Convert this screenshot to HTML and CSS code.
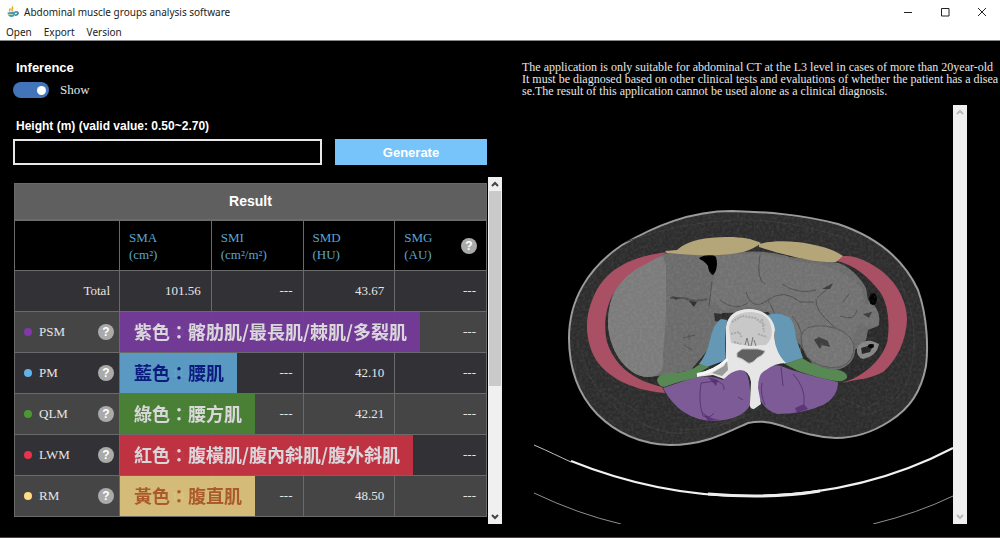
FILE: index.html
```html
<!DOCTYPE html>
<html lang="en">
<head>
<meta charset="utf-8">
<meta name="viewport" content="width=device-width, initial-scale=1">
<title>Abdominal muscle groups analysis software</title>
<link rel="stylesheet" href="styles.css">
</head>
<body>
<div class="window">
  <header class="chrome">
    <div class="titlebar">
      <svg class="app-icon" viewBox="0 0 12 12" aria-hidden="true">
        <path d="M.5 6.500L8 5.500v2.500c0 2-1.500 3-3.500 3s-4-1.500-4-4.500z" fill="#4a9db0"/>
        <path d="M8 6h2c2 0 1.400 3.200-2 3.200" fill="none" stroke="#3d7f92" stroke-width="1.500"/>
        <path d="M2.500 2.500c1.500 1-1 1.500.5 3M5 .5c1.800 1.500-1 2.500.3 5" fill="none" stroke="#e2ad3e" stroke-width="1.600"/>
        <path d="M1 8.500h5" stroke="#b7cdb5"/>
      </svg>
      <h1 class="title">Abdominal muscle groups analysis software</h1>
      <div class="window-buttons">
        <button type="button" aria-label="Minimize"><svg viewBox="0 0 10 10"><path d="M1 5.500h8"/></svg></button>
        <button type="button" aria-label="Maximize"><svg viewBox="0 0 10 10"><path d="M1.500 1.500h7.500v7.500h-7.500z"/></svg></button>
        <button type="button" aria-label="Close"><svg viewBox="0 0 10 10"><path d="M1 1l8 8M9 1l-8 8"/></svg></button>
      </div>
    </div>
    <nav class="menu">
      <button type="button">Open</button>
      <button type="button">Export</button>
      <button type="button">Version</button>
    </nav>
  </header>

  <main class="workspace">
    <section class="controls">
      <h2 class="label">Inference</h2>
      <label class="switch"><input type="checkbox" checked><span>Show</span></label>
      <label class="label height-label" for="height">Height (m) (valid value: 0.50~2.70)</label>
      <div class="height-row">
        <input class="height-input" id="height" type="text">
        <button class="generate" type="button">Generate</button>
      </div>

      <div class="scroll-panel">
        <table class="results">
          <caption>Result</caption>
          <colgroup><col class="col-name"><col><col><col><col></colgroup>
          <thead>
            <tr>
              <th></th>
              <th scope="col">SMA<br>(cm²)</th>
              <th scope="col">SMI<br>(cm²/m²)</th>
              <th scope="col">SMD<br>(HU)</th>
              <th scope="col"><div class="with-help"><span>SMG<br>(AU)</span><button class="help" type="button">?</button></div></th>
            </tr>
          </thead>
          <tbody>
            <tr><th scope="row" class="total">Total</th><td>101.56</td><td>---</td><td>43.67</td><td>---</td></tr>
            <tr>
              <th scope="row"><div class="with-help"><span class="muscle psm">PSM</span><button class="help" type="button">?</button></div></th>
              <td class="tagged">34.58<span class="tag tag-psm">紫色：髂肋肌/最長肌/棘肌/多裂肌</span></td><td>---</td><td>43.20</td><td>---</td>
            </tr>
            <tr>
              <th scope="row"><div class="with-help"><span class="muscle pm">PM</span><button class="help" type="button">?</button></div></th>
              <td class="tagged">11.68<span class="tag tag-pm">藍色：腰肌</span></td><td>---</td><td>42.10</td><td>---</td>
            </tr>
            <tr>
              <th scope="row"><div class="with-help"><span class="muscle qlm">QLM</span><button class="help" type="button">?</button></div></th>
              <td class="tagged">7.38<span class="tag tag-qlm">綠色：腰方肌</span></td><td>---</td><td>42.21</td><td>---</td>
            </tr>
            <tr>
              <th scope="row"><div class="with-help"><span class="muscle lwm">LWM</span><button class="help" type="button">?</button></div></th>
              <td class="tagged">33.58<span class="tag tag-lwm">紅色：腹橫肌/腹內斜肌/腹外斜肌</span></td><td>---</td><td>42.53</td><td>---</td>
            </tr>
            <tr>
              <th scope="row"><div class="with-help"><span class="muscle rm">RM</span><button class="help" type="button">?</button></div></th>
              <td class="tagged">14.34<span class="tag tag-rm">黃色：腹直肌</span></td><td>---</td><td>48.50</td><td>---</td>
            </tr>
          </tbody>
        </table>
        <div class="scrollbar">
          <button type="button" aria-label="Scroll up"><svg viewBox="0 0 8 8"><path d="M1 6l3-3 3 3"/></svg></button>
          <div class="track"><div class="thumb"></div></div>
          <button type="button" aria-label="Scroll down"><svg viewBox="0 0 8 8"><path d="M1 2l3 3 3-3"/></svg></button>
        </div>
      </div>
    </section>

    <section class="viewer">
      <p class="notice">The application is only suitable for abdominal CT at the L3 level in cases of more than 20year-old<br>It must be diagnosed based on other clinical tests and evaluations of whether the patient has a disea<br>se.The result of this application cannot be used alone as a clinical diagnosis.</p>
      <div class="scan">
        <svg class="ct" viewBox="534 105 419 419" role="img" aria-label="Segmented abdominal CT slice">
          <defs>
            <filter id="grain" x="0" y="0" width="100%" height="100%">
              <feTurbulence type="fractalNoise" baseFrequency=".35" numOctaves="2" seed="4"/>
              <feColorMatrix values="0 0 0 0 1  0 0 0 0 1  0 0 0 0 1  .5 0 0 0 -.17"/>
              <feComposite in2="SourceGraphic" operator="in"/>
            </filter>
            <path id="body" d="M569 338C569 300 588 268 622 245C655 226 690 211 732 211C765 212 800 214 838 224C880 238 905 262 918 290C928 318 928 350 926 366C921 392 910 408 890 421C870 434 850 438 836 438C812 437 795 430 779 425C768 421 757 421 748 423C728 432 705 445 670 445C640 444 615 432 597 414C578 394 569 368 569 338Z"/>
          </defs>
          <use href="#body" fill="#2c2c2c" stroke="#999" stroke-width="2"/>
          <g fill="none" stroke="#383838">
            <path d="M582 350Q588 390 625 414T690 432M900 280Q920 320 912 365T860 415M865 410L892 392M600 390L638 412M625 242Q680 222 735 220T850 240M680 430Q715 430 745 416M840 398L865 408M700 425Q730 424 745 413"/>
          </g>
          <path d="M666 252C720 250 790 253 838 260C872 273 889 297 889 325C888 355 875 373 848 381L800 372H700L660 386C630 382 605 360 605 325C606 290 630 263 666 252Z" fill="#292929"/>
          <!-- abdominal organs -->
          <path d="M668 253C625 262 607 290 608 325C610 354 629 376 648 377C663 376 670 373 690 371L712 345L722 313L768 312L800 345L814 366L835 370C850 368 855 358 855 350L866 340L868 330L878 326C881 310 875 306 868 300L866 288C860 276 845 262 832 262L790 257Q760 247 720 255Z" fill="#6b6b6b"/>
          <path d="M663 256C625 264 608 292 608 325C610 354 629 377 648 377C660 376 665 370 663 355L666 315L666 265Z" fill="#7b7b7b"/>
          <path d="M716 256Q760 250 800 262Q846 266 862 290Q866 318 852 338L800 340L776 314Q750 302 722 310L708 296Q718 275 716 256Z" fill="#717171"/>
          <path d="M670 298L684 298Q694 303 707 299" fill="none" stroke="#505050" stroke-width="2"/>
          <path d="M689 301L697 302L694 307Z" fill="#2c2c2c"/>
          <path d="M671 296L681 298L676 300Z" fill="#3c3c3c"/>
          <path d="M714 313L722 314L719 322L715 321Z" fill="#2c2c2c"/>
          <path d="M683 338L695 335M684 345L692 350M689 334v6" stroke="#505050" fill="none"/>
          <path d="M760 255Q756 280 765 284M746 292Q752 312 768 300T800 302L814 302M782 284Q798 295 816 290M816 299Q815 310 831 324T854 344M817 298L830 286M792 316Q806 330 800 352M840 316Q855 322 857 310M838 330Q855 345 847 358M768 300L777 318M843 302L849 294M720 300Q735 312 748 303M712 281L709 306" fill="none" stroke="#505050"/>
          <path d="M801 337Q803 324 825 326Q848 329 854 344Q855 362 840 367Q820 370 807 357Q801 347 801 337Z" fill="#747474" stroke="#555"/>
          <path d="M814 340L819 337L828 341L830 347L822 345L820 349ZM822 289L833 283L830 289Z" fill="#3c3c3c"/>
          <path d="M858 310Q861 302 872 305Q881 311 879 325Q868 331 860 322L856 316Z" fill="#707070"/>
          <path d="M863 314L872 312L869 318Z" fill="#3c3c3c"/>
          <path d="M857 348Q862 339 872 341L879 344Q877 356 863 359Q856 357 857 348Z" fill="#858585"/>
          <path d="M861 348L874 344L870 352L862 354Z" fill="#242424"/>
          <path d="M699 258Q711 252 716 257Q719 268 713 275Q709 274 708 266Q704 260 701 260Z" fill="#000"/>
          <ellipse cx="873" cy="299" rx="4" ry="6"/><ellipse cx="871" cy="346" rx="3" ry="2"/>
          <use href="#body" filter="url(#grain)" opacity=".3"/>
          <path d="M701 259Q711 254 715 257Q718 268 713 274Q709 272 708 265Z" fill="#000"/>
          <!-- muscle masks -->
          <path class="m-red" d="M668 252C625 257 603 273 593 298C585 317 585 334 592 352C601 374 628 390 665 393L662 387C633 380 615 366 607 342C600 309 615 280 642 266Z"/>
          <path class="m-red" d="M837 258C850 252 868 261 883 272C899 285 907 304 907 320C906 341 897 360 883 372C871 379 858 379 842 383C865 376 881 360 887 343C890 327 889 305 880 292C868 276 854 265 837 261Z"/>
          <path class="m-yellow" d="M665 251L677 250C688 240 706 237 727 237C744 237 752 239 761 243C752 251 739 254 720 255C700 256 680 254 667 253Z"/>
          <path class="m-yellow" d="M759 244C775 240 794 241 810 244C826 247 836 251 843 256L836 262C817 263 791 257 759 247Z"/>
          <path class="m-purple" d="M663 388L693 378Q709 374 723 380Q732 368 743 370Q749 373 750 390L751 403Q744 420 713 421Q680 420 663 388Z"/>
          <path class="m-purple" d="M758 372Q770 363 781 366Q793 371 817 377L838 382Q838 397 823 405Q803 414 777 414Q763 410 757 393Z"/>
          <path d="M701 383Q698 402 703 416Q710 419 714 413M701 383L716 381Q725 383 724 390M738 397L743 400M781 367L783 386M765 405Q760 394 762 383M793 374Q806 388 804 404" fill="none" stroke="#4e2668" opacity=".7"/>
          <path d="M701 410Q706 418 720 420L708 421ZM795 408L804 404L808 409L797 413ZM708 377L718 380L716 386Z" fill="#4e2668" opacity=".7"/>
          <path class="m-blue" d="M727 320L721 319Q713 324 710 340Q707 354 699 364L707 367L726 360Q724 340 727 320Z"/>
          <path class="m-blue" d="M767 315Q778 311 789 317Q795 323 796 338L803 358L785 364Q774 358 775 333Q773 320 767 315Z"/>
          <path class="m-green" d="M657 380Q659 373 670 373Q690 373 700 364L709 367L697 374L700 377Q680 381 664 387Q658 386 657 380Z"/>
          <path class="m-green" d="M785 364L802 358Q814 366 830 369Q848 370 847 378Q843 383 830 380Q815 377 798 371Z"/>
          <!-- vertebra -->
          <path d="M726 327C727 315 737 309 749 309C764 309 774 318 775 330C773 341 777 355 786 363Q775 363 766 370Q758 373 758 388L761 404Q757 407 754 409Q749 409 750 403L751 382Q749 370 740 370Q731 371 724 379L713 375L697 377L697 373Q714 370 726 359Z" fill="#e6e6e6"/>
          <path d="M729 328Q731 313 749 312Q768 312 771 326Q774 338 766 345L749 346L731 343Z" fill="#c8c8c8"/>
          <path d="M732 322L742 316L755 318L765 325M731 334L739 332L742 338M758 334L767 337M734 342L741 344M762 319L764 332" fill="none" stroke="#aaa" stroke-width="2" stroke-dasharray="2 1"/>
          <path d="M745 345L747 338L749 346M751 346L753 337M756 346L754 340" stroke="#777" fill="none"/>
          <path d="M737 353L742 349H758L765 351Q764 355 757 358Q752 364 748 363Q742 358 737 357Z" fill="#606060" stroke="#bbb"/>
          <path d="M712 373L724 366L727 360L728 370L722 376Z" fill="#999"/>
          <path d="M697 375Q714 372 728 359" fill="none" stroke="#f6f6f6" stroke-width="3"/>
          <!-- scanner table -->
          <g fill="none">
            <path d="M534 445C548 451 560 457 571 462" stroke="#c0c0c0"/>
            <path d="M571 461C633 486 695 497 755 496C820 495 890 481 953 448" stroke="#f2f2f2" stroke-width="2"/>
            <path d="M708 494Q732 496 755 496Q790 496 820 491" stroke="#eee" stroke-width="3"/>
            <path d="M534 493Q578 514 621 524M873 524Q918 513 953 496" stroke="#8e8e8e"/>
          </g>
        </svg>
        <div class="scrollbar disabled">
          <button type="button" aria-label="Scroll image up" disabled><svg viewBox="0 0 8 8"><path d="M1 6l3-3 3 3"/></svg></button>
          <div class="track"></div>
          <button type="button" aria-label="Scroll image down" disabled><svg viewBox="0 0 8 8"><path d="M1 2l3 3 3-3"/></svg></button>
        </div>
      </div>
    </section>
  </main>
</div>
</body>
</html>
```
FILE: styles.css
```css
* { box-sizing: border-box; }

body {
  margin: 0;
  background: #000;
  color: #e6e6e6;
  font-family: "Liberation Serif", "Noto Sans CJK TC", serif;
  font-size: 13px;
}

button { padding: 0; border: 0; background: none; color: inherit; font: inherit; }

.window {
  display: flex;
  flex-direction: column;
  min-height: 100vh;
  border-bottom: 1px solid #4a4446;
}

/* Window frame and menu */
.chrome {
  background: #fff;
  color: #222;
  border-bottom: 1px solid #888;
  font-family: "Noto Sans", sans-serif;
}
.titlebar { display: flex; align-items: center; height: 24px; padding: 0 13px 0 7px; }
.app-icon { width: 12px; height: 12px; margin-right: 5px; }
.title { margin: 0; font-size: 10px; font-weight: 400; }
.window-buttons { display: flex; gap: 27px; margin-left: auto; }
.window-buttons button { display: flex; }
.window-buttons svg { width: 10px; height: 10px; fill: none; stroke: #222; }
.menu { display: flex; gap: 12px; height: 16px; padding-left: 6px; font-size: 10px; line-height: 16px; }

/* Workspace */
.workspace { display: grid; grid-template-columns: minmax(0, 502fr) minmax(0, 498fr); flex: 1; }
.controls { display: flex; flex-direction: column; padding: 19px 0 13px 13px; }
.label { margin: 0 0 0 3px; color: #fff; font: bold 13px/16px "Liberation Sans", sans-serif; }
.switch { display: flex; align-items: center; gap: 11px; height: 28px; }
.switch input {
  appearance: none;
  display: flex;
  align-items: center;
  justify-content: flex-end;
  width: 36px;
  height: 16px;
  margin: 0;
  padding-right: 3px;
  border-radius: 8px;
  background: #4274ba;
}
.switch input::before { content: ""; width: 9px; height: 9px; border-radius: 50%; background: #fff; }
.height-label { margin-top: 14px; font-size: 12px; }
.height-row { display: grid; grid-template-columns: 309fr 152fr; gap: 13px; margin: 5px 15px 12px 0; }
.height-input {
  width: 100%;
  height: 26px;
  padding: 0 6px;
  border: 2px solid #e8e8e8;
  border-radius: 0;
  background: #000;
  color: #fff;
}
.generate { height: 26px; background: #77c4fb; color: #fff; font: bold 13px "Liberation Sans", sans-serif; }

/* Results */
.scroll-panel { display: flex; flex: 1; align-items: stretch; }
.results {
  flex: 1;
  align-self: flex-start;
  width: 100%;
  margin: 6px 1px 0 1px;
  border-collapse: collapse;
  table-layout: fixed;
}
.results caption {
  border: 1px solid #6a6a6a;
  background: #5f5f5f;
  color: #fff;
  font: bold 14px/35px "Liberation Sans", sans-serif;
}
.col-name { width: 105px; }
.results th, .results td { height: 41px; padding: 0 9px; border: 1px solid #6a6a6a; font-weight: 400; }
.results thead th { height: 50px; color: #5aa5d0; line-height: 17px; text-align: left; }
.results td { padding-right: 10px; text-align: right; }
.results tbody th { padding: 0 5px 0 9px; text-align: left; }
.results tbody .total { padding-right: 9px; text-align: right; }
.results tbody tr { background: #454545; }
.results tbody tr:nth-child(odd) { background: #323135; }
.with-help { display: flex; align-items: center; justify-content: space-between; }
.help {
  width: 16px;
  height: 16px;
  border-radius: 50%;
  background: #aaa;
  color: #fff;
  font: bold 12px/16px "Liberation Sans", sans-serif;
}
.muscle { display: flex; align-items: center; gap: 7px; }
.muscle::before { content: ""; width: 8px; height: 8px; border-radius: 50%; background: currentColor; }
.psm::before { background: #8138a8; }
.pm::before { background: #61b3e8; }
.qlm::before { background: #4a9933; }
.lwm::before { background: #e9324b; }
.rm::before { background: #ffdc86; }

/* Colour legends lying over the measured values */
.tagged { position: relative; }
.tag {
  position: absolute;
  inset: 0 auto 0 0;
  z-index: 1;
  display: flex;
  align-items: center;
  padding: 0 13px 3px 14px;
  color: #e2dfe4;
  font: 700 18px "Noto Sans CJK TC", sans-serif;
  white-space: nowrap;
  opacity: .95;
}
.tag-psm { background: #743a99; }
.tag-pm { background: #5da0ca; color: #0a1a84; }
.tag-qlm { background: #4a8436; }
.tag-lwm { background: #c63342; }
.tag-rm { background: #ddc27b; color: #af5d2b; }

/* Scrollbars */
.scrollbar { display: flex; flex-direction: column; flex: none; width: 14px; background: #f0f0f0; }
.scrollbar button { display: flex; align-items: center; justify-content: center; height: 14px; }
.scrollbar svg { width: 8px; height: 8px; fill: none; stroke: #444; stroke-width: 2; }
.scrollbar.disabled svg { stroke: #bbb; }
.track { flex: 1; padding: 0 1px; }
.thumb { height: 61%; background: #cacaca; }

/* CT viewer */
.viewer { display: flex; flex-direction: column; padding: 20px 20px 13px 20px; }
.notice { margin: 0; font-size: 12px; line-height: 12px; white-space: nowrap; }
.scan { display: flex; flex: 1; margin: 8px 13px 0 12px; }
.ct { flex: 1; min-width: 0; display: block; }
.m-red { fill: #aa5065; }
.m-yellow { fill: #b5a67a; }
.m-purple { fill: #7c5b96; }
.m-blue { fill: #6498b4; }
.m-green { fill: #588954; }
```
